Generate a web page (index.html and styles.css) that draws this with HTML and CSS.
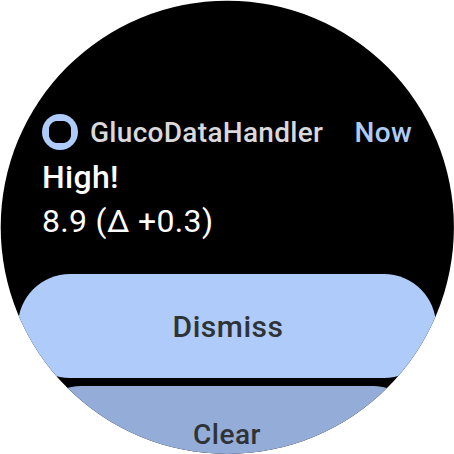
FILE: index.html
```html
<!DOCTYPE html>
<html lang="en">
<head>
<meta charset="utf-8">
<title>GlucoDataHandler</title>
<link rel="stylesheet" href="styles.css">
</head>
<body>
<main class="watch">
  <section class="notification">
    <header class="header">
      <svg class="app-icon" viewBox="0 0 36 36"><circle cx="18" cy="18" r="18" fill="#aecbfa"/><path d="M14 7h8l3 1 3 3 1 3v8l-1 3-3 3-3 1h-8l-3-1-3-3-1-3v-8l1-3 3-3z" fill="#000"/></svg>
      <span class="app-name">GlucoDataHandler</span>
      <span class="time">Now</span>
    </header>
    <h1 class="title">High!</h1>
    <p class="value">8.9 (Δ +0.3)</p>
  </section>
  <button class="button dismiss">Dismiss</button>
  <button class="button clear">Clear</button>
</main>
</body>
</html>
```
FILE: styles.css
```css
body {
  margin: 0;
  background: #fff;
  font-family: Roboto, "Liberation Sans", sans-serif;
}

.watch {
  box-sizing: border-box;
  display: flex;
  flex-direction: column;
  width: 454px;
  height: 454px;
  padding: 114px 18px 0;
  overflow: hidden;
  background: #000;
  clip-path: circle(226.6px at 227.3px 227.3px);
}

.notification {
  flex: none;
  height: 160px;
  padding: 0 24px;
  color: #fff;
}

.header {
  display: flex;
  align-items: center;
  height: 36px;
  font-size: 28px;
  font-weight: 500;
  letter-spacing: 0.3px;
}

.app-icon {
  width: 36px;
  height: 36px;
  margin-right: 12px;
}

.app-name {
  color: #d9d9dd;
}

.time {
  margin-left: auto;
  color: #aecbfa;
}

.title,
.value {
  margin: 0;
  font-size: 32px;
  line-height: 44px;
  letter-spacing: 0.32px;
}

.title {
  margin-top: 5px;
  font-weight: 500;
}

.value {
  font-weight: 400;
}

.button {
  flex: none;
  box-sizing: border-box;
  height: 104px;
  padding: 0;
  border: 0;
  border-radius: 52px;
  font: 500 30px/102px Roboto, "Liberation Sans", sans-serif;
  letter-spacing: 0.5px;
  color: #2f3336;
  background: #aecbfa;
}

.dismiss {
  padding: 2px 0 0 2px;
}

.clear {
  height: 98px;
  margin: 8px 14px 0;
  font-size: 28px;
  line-height: 98px;
  background: #94acd8;
}
```
